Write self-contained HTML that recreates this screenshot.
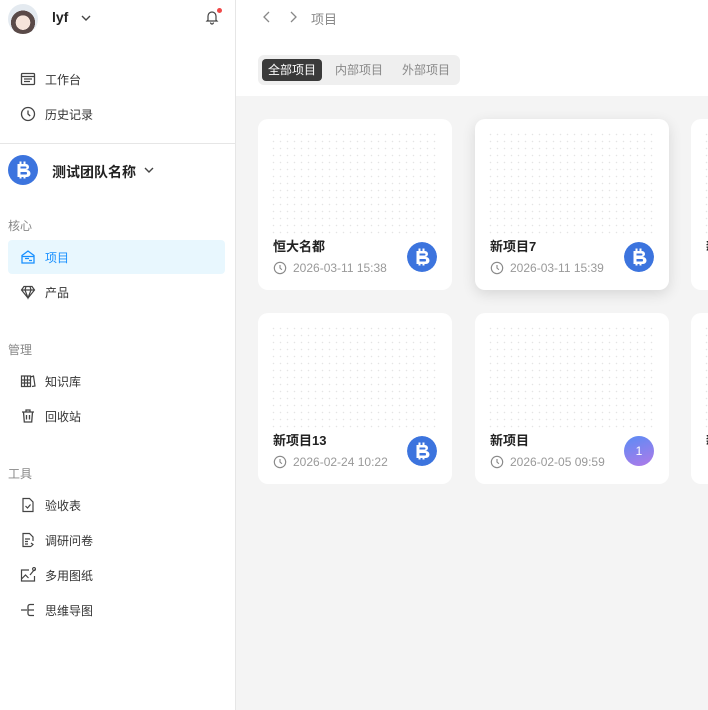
<!DOCTYPE html>
<html><head><meta charset="utf-8"><style>
*{box-sizing:border-box;margin:0;padding:0}
body{width:708px;height:710px;overflow:hidden;font-family:"Liberation Sans","Noto Sans CJK SC",sans-serif;background:#fff;position:relative;color:#333}
.side{position:absolute;left:0;top:0;width:236px;height:710px;background:#fff;border-right:1px solid #e6e6e6}
.main{position:absolute;left:236px;top:0;right:0;height:710px;background:#f4f4f4}
.hdr{position:absolute;left:0;top:0;right:0;height:96px;background:#fff}
.abs{position:absolute}
.item{position:absolute;left:8px;width:217px;height:34px;display:flex;align-items:center;padding-left:12px;font-size:12px;color:#333;border-radius:4px}
.item svg{margin-right:9px}
.sec{position:absolute;left:8px;font-size:12px;color:#888}
.card{position:absolute;width:194px;height:171px;background:#fff;border-radius:10px;overflow:hidden}
.dots{position:absolute;left:12px;top:12px;right:12px;height:104px;background-image:radial-gradient(circle,#e4e4e4 0.6px,transparent 0.9px);background-size:7px 7px}
.ttl{position:absolute;left:15px;top:117px;font-size:13px;font-weight:bold;color:#222}
.dt{position:absolute;left:15px;top:142px;font-size:12px;color:#999;display:flex;align-items:center}
.dt svg{margin-right:6px}
.btc{position:absolute;width:30px;height:30px;border-radius:50%;background:#3c74de}
.tab{position:absolute;top:59px;height:22px;font-size:12px;line-height:22px;text-align:center;color:#888;border-radius:4px}
</style></head><body>
<svg width="0" height="0" style="position:absolute"><defs>
<symbol id="b" viewBox="0 0 30 30"><circle cx="15" cy="15" r="15" fill="#3c74de"/><rect x="11.5" y="6.5" width="2" height="17" fill="#fff"/><rect x="15.5" y="6.5" width="2" height="17" fill="#fff"/><path d="M9.5 9h8.5a3 3 0 0 1 0 6h-8.5zM9.5 15h9.5a3.5 3.5 0 0 1 0 7h-9.5z" fill="#fff"/><path d="M12.5 11.5h5a1 1 0 0 1 0 2h-5zM12.5 17h6a1.7 1.7 0 0 1 0 2.5h-6z" fill="#3c74de"/></symbol>
<symbol id="c" viewBox="0 0 16 16"><circle cx="8" cy="8" r="6.5" fill="none" stroke="currentColor" stroke-width="1.3"/><path d="M8 4.5V8l2.2 2" fill="none" stroke="currentColor" stroke-width="1.3"/></symbol>
</defs></svg>
<div class="side">
 <div class="abs" style="left:8px;top:4px;width:30px;height:30px;border-radius:50%;background:radial-gradient(circle at 50% 62%,#f6e4da 0 30%,#5a4a48 31% 50%,#e4eaf0 51%)"></div>
 <div class="abs" style="left:52px;top:9px;font-size:14px;font-weight:bold;color:#222">lyf</div>
 <svg class="abs" style="left:80px;top:12px" width="12" height="12" viewBox="0 0 12 12"><path d="M2 4l4 4 4-4" fill="none" stroke="#444" stroke-width="1.4"/></svg>
 <svg class="abs" style="left:204px;top:9px" width="16" height="16" viewBox="0 0 16 16"><path d="M4 11V7a4 4 0 0 1 8 0v4l1 1H3zM6.5 13.5a1.5 1.5 0 0 0 3 0" fill="none" stroke="#444" stroke-width="1.2"/></svg>
 <div class="abs" style="left:217px;top:8px;width:5px;height:5px;border-radius:50%;background:#f04848"></div>
 <div class="item" style="top:62px"><svg width="16" height="16" viewBox="0 0 16 16"><rect x="1.5" y="2.5" width="13" height="11" rx="1" fill="none" stroke="#444" stroke-width="1.3"/><path d="M1.5 5.5h13M4 8h8M4 10.5h6" stroke="#444" stroke-width="1.2"/></svg>工作台</div>
 <div class="item" style="top:97px"><svg width="16" height="16" style="color:#444"><use href="#c"/></svg>历史记录</div>
 <div class="abs" style="left:0;top:143px;width:236px;height:1px;background:#e6e6e6"></div>
 <svg class="abs" style="left:8px;top:155px" width="30" height="30"><use href="#b"/></svg>
 <div class="abs" style="left:52px;top:162px;font-size:14px;font-weight:bold;color:#222">测试团队名称</div>
 <svg class="abs" style="left:143px;top:164px" width="12" height="12" viewBox="0 0 12 12"><path d="M2 4l4 4 4-4" fill="none" stroke="#444" stroke-width="1.4"/></svg>
 <div class="sec" style="top:217px">核心</div>
 <div class="item" style="top:240px;background:#e8f7fe;color:#1890ff"><svg width="16" height="16" viewBox="0 0 16 16"><path d="M2 6.5L8 2l6 4.5V14H2z M2 7.5h12 M5 9.5h4 M9 11.5h3" fill="none" stroke="#1890ff" stroke-width="1.3"/></svg>项目</div>
 <div class="item" style="top:275px"><svg width="16" height="16" viewBox="0 0 16 16"><path d="M4 2.5h8l2.5 3.5L8 14 1.5 6zM1.5 6h13M6 2.5L5 6l3 8 3-8-1-3.5" fill="none" stroke="#444" stroke-width="1.2"/></svg>产品</div>
 <div class="sec" style="top:341px">管理</div>
 <div class="item" style="top:364px"><svg width="16" height="16" viewBox="0 0 16 16"><path d="M1.5 3h9v10.5h-9zM1.5 7h9M1.5 10h9M4.5 3v10.5M7.5 3v10.5M10.5 4l3 -1 1.5 10-3 .5" fill="none" stroke="#444" stroke-width="1.2"/></svg>知识库</div>
 <div class="item" style="top:399px"><svg width="16" height="16" viewBox="0 0 16 16"><path d="M2 4h12M6 4V2h4v2M3.5 4l.8 10h7.4l.8-10M6.5 7v4.5M9.5 7v4.5" fill="none" stroke="#444" stroke-width="1.3"/></svg>回收站</div>
 <div class="sec" style="top:465px">工具</div>
 <div class="item" style="top:488px"><svg width="16" height="16" viewBox="0 0 16 16"><path d="M3 1.5h6.5L13 5v9.5H3zM5.5 9l2 2 3-3.5" fill="none" stroke="#444" stroke-width="1.2"/></svg>验收表</div>
 <div class="item" style="top:523px"><svg width="16" height="16" viewBox="0 0 16 16"><path d="M11 14.5H3v-13h6.5L13 5v4M5 7h5M5 9.5h3M5 12h3M11 11l2 1.5-2 2" fill="none" stroke="#444" stroke-width="1.2"/></svg>调研问卷</div>
 <div class="item" style="top:558px"><svg width="16" height="16" viewBox="0 0 16 16"><path d="M9 3H1.5v11h13V9M1.5 12l4-4 3 3M10 8l4.5-5.5M12.5 2a1.5 1.5 0 1 1 0 .1" fill="none" stroke="#444" stroke-width="1.2"/></svg>多用图纸</div>
 <div class="item" style="top:593px"><svg width="16" height="16" viewBox="0 0 16 16"><path d="M1 8h6M14 2.5h-4a2 2 0 0 0-2 2v7a2 2 0 0 0 2 2h4M8 8h6" fill="none" stroke="#444" stroke-width="1.3"/></svg>思维导图</div>
</div>
<div class="main">
 <div class="hdr">
  <svg class="abs" style="left:24px;top:10px" width="14" height="14" viewBox="0 0 14 14"><path d="M9 2L4 7l5 5" fill="none" stroke="#888" stroke-width="1.3"/></svg>
  <svg class="abs" style="left:50px;top:10px" width="14" height="14" viewBox="0 0 14 14"><path d="M5 2l5 5-5 5" fill="none" stroke="#888" stroke-width="1.3"/></svg>
  <div class="abs" style="left:75px;top:9px;font-size:13px;color:#888">项目</div>
  <div class="abs" style="left:22px;top:55px;width:202px;height:30px;background:#efefef;border-radius:6px"></div>
  <div class="tab" style="left:26px;width:60px;background:#3a3a3a;color:#fff">全部项目</div>
  <div class="tab" style="left:93px;width:60px">内部项目</div>
  <div class="tab" style="left:160px;width:60px">外部项目</div>
 </div>
 <div class="card" style="left:22px;top:119px"><div class="dots"></div><div class="ttl">恒大名都</div><div class="dt"><svg width="14" height="14" viewBox="0 0 16 16" style="color:#888"><use href="#c"/></svg>2026-03-11 15:38</div><svg class="btc" style="left:149px;top:123px;background:none" width="30" height="30"><use href="#b"/></svg></div>
 <div class="card" style="left:239px;top:119px;box-shadow:0 4px 14px rgba(0,0,0,.12)"><div class="dots"></div><div class="ttl">新项目7</div><div class="dt"><svg width="14" height="14" viewBox="0 0 16 16" style="color:#888"><use href="#c"/></svg>2026-03-11 15:39</div><svg class="btc" style="left:149px;top:123px;background:none" width="30" height="30"><use href="#b"/></svg></div>
 <div class="card" style="left:455px;top:119px"><div class="dots"></div><div class="ttl">新</div></div>
 <div class="card" style="left:22px;top:313px"><div class="dots"></div><div class="ttl">新项目13</div><div class="dt"><svg width="14" height="14" viewBox="0 0 16 16" style="color:#888"><use href="#c"/></svg>2026-02-24 10:22</div><svg class="btc" style="left:149px;top:123px;background:none" width="30" height="30"><use href="#b"/></svg></div>
 <div class="card" style="left:239px;top:313px"><div class="dots"></div><div class="ttl">新项目</div><div class="dt"><svg width="14" height="14" viewBox="0 0 16 16" style="color:#888"><use href="#c"/></svg>2026-02-05 09:59</div><div class="abs" style="left:149px;top:123px;width:30px;height:30px;border-radius:50%;background:linear-gradient(160deg,#5a8cf5,#b07ae8);color:#fff;font-size:12px;text-align:center;line-height:30px">1</div></div>
 <div class="card" style="left:455px;top:313px"><div class="dots"></div><div class="ttl">新</div></div>
</div>
</body></html>
